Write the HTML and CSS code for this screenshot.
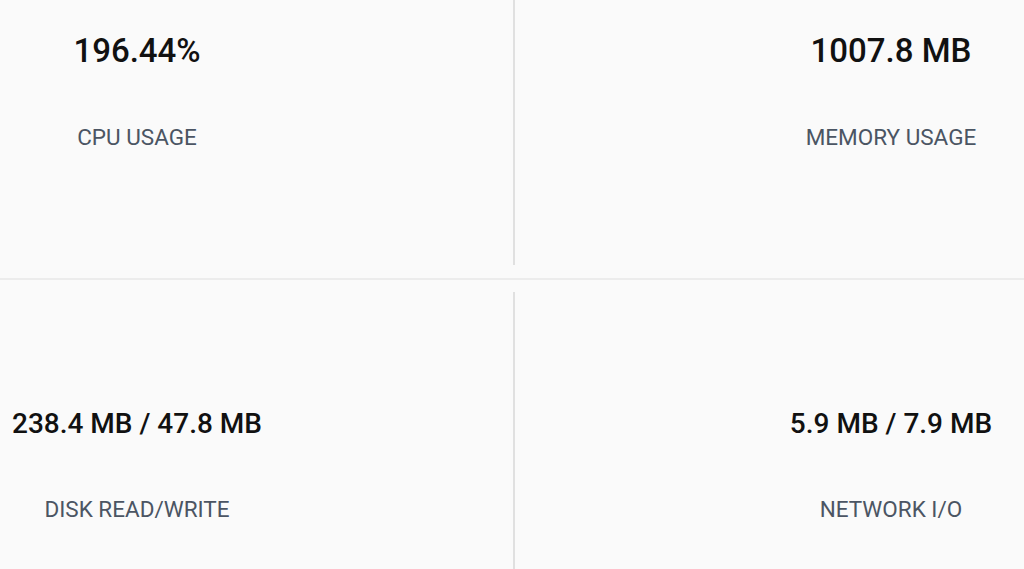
FILE: index.html
```html
<!DOCTYPE html>
<html lang="en">
<head>
<meta charset="utf-8">
<title>Container stats</title>
<link rel="stylesheet" href="styles.css">
</head>
<body>
<main class="stats">
  <section class="row row-top">
    <div class="cell cell-left">
      <div class="stat">
        <div class="value value-lg">196.44%</div>
        <div class="label">CPU USAGE</div>
      </div>
    </div>
    <div class="divider"></div>
    <div class="cell cell-right">
      <div class="stat">
        <div class="value value-lg">1007.8 MB</div>
        <div class="label">MEMORY USAGE</div>
      </div>
    </div>
  </section>
  <section class="row row-bottom">
    <div class="cell cell-left">
      <div class="stat">
        <div class="value value-md">238.4 MB / 47.8 MB</div>
        <div class="label">DISK READ/WRITE</div>
      </div>
    </div>
    <div class="divider"></div>
    <div class="cell cell-right">
      <div class="stat">
        <div class="value value-md">5.9 MB / 7.9 MB</div>
        <div class="label">NETWORK I/O</div>
      </div>
    </div>
  </section>
</main>
</body>
</html>
```
FILE: styles.css
```css
html, body {
  margin: 0;
  padding: 0;
  background: #fafafa;
  height: 100%;
  overflow: hidden;
}
body {
  font-family: Roboto, "Liberation Sans", sans-serif;
}
.stats {
  display: flex;
  flex-direction: column;
  height: 569px;
}
.row {
  display: flex;
}
.row-top {
  height: 278px;
  border-bottom: 2px solid #ececec;
}
.row-bottom {
  flex: 1;
}
.cell {
  display: flex;
}
.cell-left {
  flex: 0 0 513px;
  justify-content: flex-start;
}
.cell-right {
  flex: 1;
  justify-content: flex-end;
}
.divider {
  width: 2px;
  background: #e0e0e0;
}
.row-top .divider {
  margin-bottom: 13px;
}
.row-bottom .divider {
  margin-top: 12px;
}
.stat {
  display: flex;
  flex-direction: column;
  align-items: center;
  text-align: center;
}
.cell-left .stat {
  width: 274px;
}
.cell-right .stat {
  width: 266px;
}
.row-top .stat {
  padding-top: 31px;
}
.row-bottom .stat {
  padding-top: 127px;
}
.value {
  color: #111111;
  font-weight: 500;
  white-space: nowrap;
}
.value-lg {
  font-size: 33px;
  line-height: 40px;
}
.value-md {
  font-size: 28px;
  line-height: 34px;
}
.label {
  color: #4b5563;
  font-size: 22.5px;
  line-height: 28px;
  white-space: nowrap;
}
.row-top .label {
  margin-top: 52px;
}
.row-bottom .label {
  margin-top: 54px;
}
```
